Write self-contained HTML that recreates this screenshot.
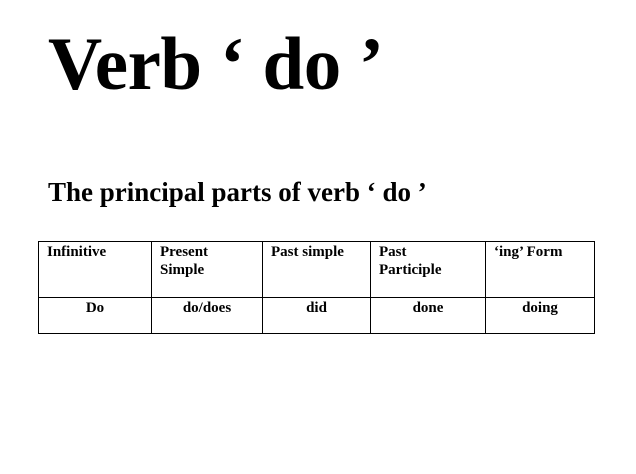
<!DOCTYPE html>
<html><head><style>
html,body{margin:0;padding:0;background:#fff;width:636px;height:474px;overflow:hidden}
body{font-family:"Liberation Serif",serif;font-weight:bold;color:#000;position:relative}
.t{position:absolute;left:48px;top:27px;font-size:75px;line-height:1;white-space:nowrap;letter-spacing:-0.5px}
.s{position:absolute;left:48px;top:179px;font-size:27px;line-height:1;white-space:nowrap}
table{position:absolute;left:38px;top:241px;border-collapse:collapse;font-size:15px;line-height:18px}
td{border:1px solid #000;padding:0;vertical-align:top}
.h td{height:54px;padding:1px 0 0 8px}
.r td{height:34px;text-align:center;padding-top:1px}
</style></head><body>
<div class="t">Verb ‘ do ’</div>
<div class="s">The principal parts of verb ‘ do ’</div>
<table>
<tr class="h"><td style="width:104px">Infinitive</td><td style="width:102px">Present<br>Simple</td><td style="width:99px">Past simple</td><td style="width:106px">Past<br>Participle</td><td style="width:100px">‘ing’ Form</td></tr>
<tr class="r"><td>Do</td><td>do/does</td><td>did</td><td>done</td><td>doing</td></tr>
</table>
</body></html>
